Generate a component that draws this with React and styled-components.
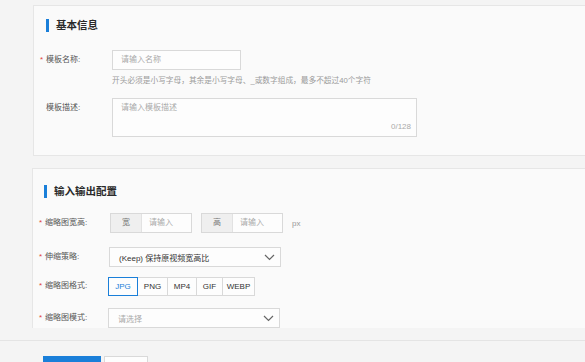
import styled, { createGlobalStyle } from 'styled-components'

const GlobalStyle = createGlobalStyle`
  html, body {
    margin: 0;
    padding: 0;
    background: #f4f4f4;
    overflow: hidden;
  }
  body {
    font-family: "Liberation Sans", "Noto Sans CJK SC", sans-serif;
    color: #333;
  }
`

const Page = styled.div`
  width: 585px;
  height: 362px;
  padding-top: 5px;
  box-sizing: border-box;
`

const Card = styled.div`
  margin-left: ${p => p.$left}px;
  margin-top: ${p => p.$top || 0}px;
  width: 600px;
  background: #fafafa;
  border: 1px solid #e6e6e6;
  border-right: none;
  ${p => p.$open && 'border-bottom: none;'}
  padding-bottom: ${p => p.$bottom}px;
  box-sizing: border-box;
`

const CardTitle = styled.div`
  display: flex;
  align-items: center;
  gap: 7px;
  padding: ${p => p.$top}px 0 0 ${p => p.$left}px;
  height: 14px;
  line-height: 14px;
  font-size: 10.5px;
  font-weight: bold;
  color: #2a2a2a;

  &::before {
    content: "";
    width: 3px;
    height: 13px;
    background: #1a7fd9;
  }
`

const Row = styled.div`
  display: flex;
  align-items: ${p => (p.$alignTop ? 'flex-start' : 'center')};
  margin-top: ${p => p.$top}px;
`

const Label = styled.div`
  width: ${p => p.$width}px;
  flex-shrink: 0;
  box-sizing: border-box;
  padding-left: ${p => p.$pad}px;
  font-size: 8px;
  color: #555;
  line-height: 20px;
  display: flex;

  &::before {
    content: "*";
    color: #e0403a;
    width: 6px;
    visibility: ${p => (p.$required ? 'visible' : 'hidden')};
  }
`

const TextInput = styled.div`
  width: ${p => p.$width}px;
  height: 20px;
  box-sizing: border-box;
  border: 1px solid #d9d9d9;
  background: #fdfdfd;
  padding-left: 8px;
  font-size: 8px;
  line-height: 18px;
  color: #aaa;
`

const Hint = styled.div`
  margin: 6px 0 0 78px;
  font-size: 7.7px;
  line-height: 10px;
  color: #9a9a9a;
`

const TextArea = styled.div`
  position: relative;
  width: 305px;
  height: 39px;
  box-sizing: border-box;
  border: 1px solid #d9d9d9;
  background: #fdfdfd;
  padding: 3px 8px;
  font-size: 8px;
  line-height: 12px;
  color: #aaa;
`

const Counter = styled.span`
  position: absolute;
  right: 5px;
  bottom: 3px;
  font-size: 8px;
  color: #aaa;
`

const Group = styled.div`
  display: flex;
  width: 82px;
  height: 20px;
  box-sizing: border-box;
  border: 1px solid #d9d9d9;
  margin-right: ${p => p.$gap}px;
  font-size: 8px;
  line-height: 18px;
`

const Addon = styled.div`
  width: 30px;
  background: #efefef;
  border-right: 1px solid #e2e2e2;
  text-align: center;
  color: #777;
`

const GroupInput = styled.div`
  flex: 1;
  padding-left: 7px;
  background: #fdfdfd;
  color: #aaa;
`

const Unit = styled.span`
  font-size: 8px;
  color: #999;
`

const Select = styled.div`
  display: flex;
  align-items: center;
  justify-content: space-between;
  width: 172px;
  height: 20px;
  box-sizing: border-box;
  border: 1px solid #d9d9d9;
  background: #fdfdfd;
  padding: 0 5px 0 9px;
  font-size: 8px;
  color: ${p => (p.$placeholder ? '#aaa' : '#333')};
`

const Segments = styled.div`
  display: flex;
  height: 19px;
`

const Segment = styled.div`
  width: ${p => p.$width}px;
  box-sizing: border-box;
  text-align: center;
  border: 1px solid ${p => (p.$active ? '#1a7fd9' : '#d9d9d9')};
  margin-left: ${p => (p.$first ? 0 : -1)}px;
  position: relative;
  z-index: ${p => (p.$active ? 1 : 0)};
  background: #fdfdfd;
  font-size: 8px;
  line-height: 17px;
  color: ${p => (p.$active ? '#1a7fd9' : '#333')};
`

const Footer = styled.div`
  margin-top: 12px;
  border-top: 1px solid #e4e4e4;
  padding: 15px 0 0 43px;
  display: flex;
  gap: 3px;
`

const Button = styled.div`
  width: ${p => p.$width}px;
  height: 20px;
  box-sizing: border-box;
  background: ${p => (p.$primary ? '#1a7fd9' : '#fdfdfd')};
  border: 1px solid ${p => (p.$primary ? '#1a7fd9' : '#d9d9d9')};
`

const Chevron = () => (
  <svg width="11" height="7" viewBox="0 0 11 7">
    <polyline points="1,1 5.5,5.5 10,1" fill="none" stroke="#666" strokeWidth="1.2" />
  </svg>
)

const formats = [
  { name: 'JPG', width: 30, active: true },
  { name: 'PNG', width: 31 },
  { name: 'MP4', width: 30 },
  { name: 'GIF', width: 27 },
  { name: 'WEBP', width: 33 },
]

function App() {
  return (
    <>
      <GlobalStyle />
      <Page>
        <Card $left={33} $bottom={18}>
          <CardTitle $top={12} $left={12}>基本信息</CardTitle>
          <Row $top={18}>
            <Label $width={78} $pad={6} $required>模板名称:</Label>
            <TextInput $width={129}>请输入名称</TextInput>
          </Row>
          <Hint>开头必须是小写字母，其余是小写字母、_或数字组成，最多不超过40个字符</Hint>
          <Row $top={12} $alignTop>
            <Label $width={78} $pad={6}>模板描述:</Label>
            <TextArea>
              请输入模板描述
              <Counter>0/128</Counter>
            </TextArea>
          </Row>
        </Card>

        <Card $left={32} $top={12} $bottom={0} $open>
          <CardTitle $top={15} $left={11}>输入输出配置</CardTitle>
          <Row $top={15}>
            <Label $width={77} $pad={6} $required>缩略图宽高:</Label>
            <Group $gap={9}>
              <Addon>宽</Addon>
              <GroupInput>请输入</GroupInput>
            </Group>
            <Group $gap={9}>
              <Addon>高</Addon>
              <GroupInput>请输入</GroupInput>
            </Group>
            <Unit>px</Unit>
          </Row>
          <Row $top={14}>
            <Label $width={76} $pad={6} $required>伸缩策略:</Label>
            <Select>
              (Keep) 保持原视频宽高比
              <Chevron />
            </Select>
          </Row>
          <Row $top={9}>
            <Label $width={75} $pad={6} $required>缩略图格式:</Label>
            <Segments>
              {formats.map((f, i) => (
                <Segment key={f.name} $width={f.width} $active={f.active} $first={i === 0}>
                  {f.name}
                </Segment>
              ))}
            </Segments>
          </Row>
          <Row $top={12}>
            <Label $width={75} $pad={6} $required>缩略图模式:</Label>
            <Select $placeholder>
              请选择
              <Chevron />
            </Select>
          </Row>
        </Card>

        <Footer>
          <Button $primary $width={58} />
          <Button $width={44} />
        </Footer>
      </Page>
    </>
  )
}

export default App
